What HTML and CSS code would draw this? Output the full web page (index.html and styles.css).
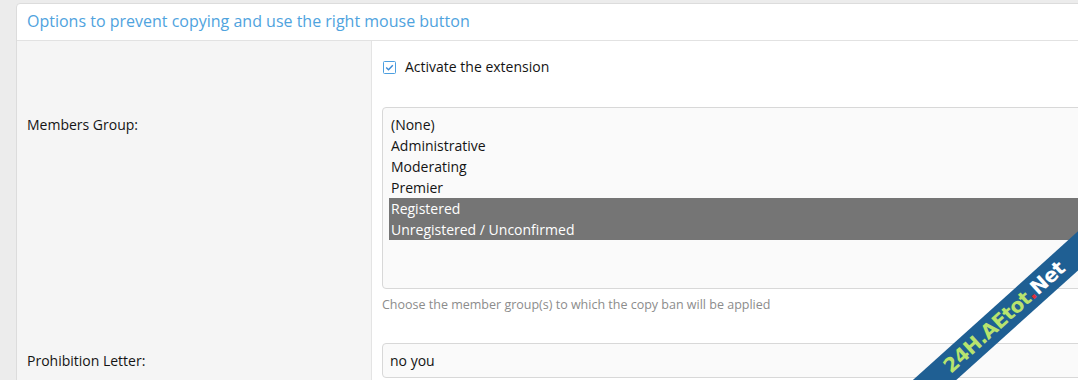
FILE: index.html
```html
<!DOCTYPE html>
<html lang="en">
<head>
    <meta charset="UTF-8">
    <title>Copy protection options</title>
    <link rel="stylesheet" href="styles.css">
</head>
<body>
    <div class="block">
        <h2 class="block-header">Options to prevent copying and use the right mouse button</h2>
        <div class="block-body">
            <dl class="form-row first">
                <dt></dt>
                <dd>
                    <label class="checkbox">
                        <span class="check-box">
                            <svg width="13" height="13" viewBox="0 0 13 13">
                                <rect x="0.5" y="0.5" width="12" height="12" rx="1" fill="#fff" stroke="#4c9fe0"/>
                                <path d="M3.2 6.6 L5.5 8.8 L9.8 4.2" fill="none" stroke="#3a8ad6" stroke-width="1.4"/>
                            </svg>
                        </span>
                        Activate the extension
                    </label>
                </dd>
            </dl>
            <dl class="form-row">
                <dt>Members Group:</dt>
                <dd>
                    <div class="listbox">
                        <div class="option">(None)</div>
                        <div class="option">Administrative</div>
                        <div class="option">Moderating</div>
                        <div class="option">Premier</div>
                        <div class="option selected">Registered</div>
                        <div class="option selected">Unregistered / Unconfirmed</div>
                    </div>
                    <div class="explain">Choose the member group(s) to which the copy ban will be applied</div>
                </dd>
            </dl>
            <dl class="form-row">
                <dt>Prohibition Letter:</dt>
                <dd>
                    <div class="input">no you</div>
                </dd>
            </dl>
        </div>
    </div>

    <!-- watermark ribbon -->
    <div class="ribbon">
        <span class="green">24H.AEtot</span><span class="red">.</span><span class="white">Net</span>
    </div>
</body>
</html>
```

FILE: styles.css
```css
html, body {
    height: 100%;
}
body {
    margin: 0;
    padding: 3px 0 0 16px;
    background: #ececec;
    font-family: "Open Sans", Arial, sans-serif;
    font-size: 14px;
    color: #141414;
    overflow: hidden;
    position: relative;
}
.block {
    width: 1120px;
    background: #fff;
    border: 1px solid #dcdcdc;
    border-radius: 4px;
}
.block-header {
    margin: 0;
    padding: 0 10px;
    height: 36px;
    line-height: 35px;
    font-size: 16px;
    font-weight: normal;
    color: #4fa3de;
    border-bottom: 1px solid #e2e2e2;
}
.block-body {
    background: linear-gradient(to right, #f5f5f5 354px, #fff 354px);
}
.form-row {
    display: flex;
    margin: 0;
}
.form-row dt {
    width: 344px;
    padding: 18px 0 0 10px;
    line-height: 20px;
    flex-shrink: 0;
}
.form-row dd {
    flex: 1;
    margin: 0;
    padding: 10px 0 20px 10px;
    border-left: 1px solid #e4e4e4;
}
.form-row.first dd {
    padding: 16px 0 20px 11px;
}
.checkbox {
    display: flex;
    align-items: center;
    gap: 9px;
    line-height: 20px;
}
.check-box {
    display: flex;
}
.listbox {
    height: 168px;
    padding: 6px 6px;
    background: #fafafa;
    border: 1px solid #d8d8d8;
    border-radius: 4px;
}
.option {
    height: 21px;
    line-height: 21px;
    padding-left: 2px;
}
.option.selected {
    background: #757575;
    color: #fff;
}
.explain {
    margin-top: 8px;
    font-size: 12.5px;
    color: #8c8c8c;
    line-height: 16px;
}
.input {
    height: 33px;
    line-height: 33px;
    padding: 0 7px;
    background: #fafafa;
    border: 1px solid #d8d8d8;
    border-radius: 4px;
}
.ribbon {
    position: absolute;
    left: 814px;
    top: 294px;
    width: 400px;
    height: 29px;
    line-height: 29px;
    padding-right: 26px;
    box-sizing: border-box;
    background: #1f5f93;
    transform: rotate(-42deg);
    text-align: center;
    font-family: "DejaVu Sans", sans-serif;
    font-weight: bold;
    font-size: 20px;
    letter-spacing: -0.5px;
}
.ribbon .green {
    color: #b8e36e;
}
.ribbon .red {
    color: #e0303a;
}
.ribbon .white {
    color: #fff;
}
```
